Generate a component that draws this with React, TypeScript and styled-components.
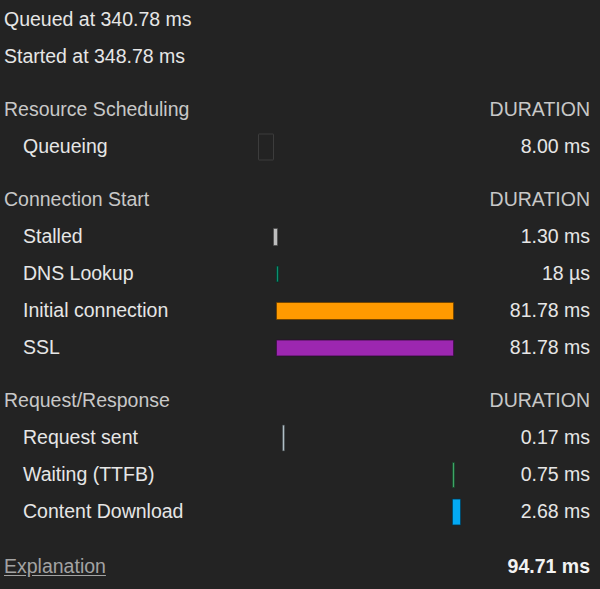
import React from "react";
import styled, { createGlobalStyle } from "styled-components";

const Global = createGlobalStyle`
  html, body { margin: 0; padding: 0; background: #232323; }
  body { font-family: "Liberation Sans", Arial, sans-serif; }
`;

const Page = styled.div`
  width: 600px;
  height: 589px;
  box-sizing: border-box;
  padding: 1px 10px 0 4px;
  background: #232323;
  color: #e6e6e6;
  font-size: 19.5px;
  overflow: hidden;
  display: flex;
  flex-direction: column;
`;

const Line = styled.div`
  height: 37px;
  display: flex;
  align-items: center;
`;

const Section = styled.section`
  margin-top: 16px;
  display: grid;
  grid-template-columns: 254px 204px 1fr;
  grid-auto-rows: 37px;
  align-items: center;
`;

const SectionTitle = styled.div`
  grid-column: 1 / 3;
  color: #c8c8c8;
`;

const DurationHead = styled.div`
  text-align: right;
  color: #c8c8c8;
`;

const Label = styled.div`
  padding-left: 19px;
`;

const Track = styled.div`
  position: relative;
  height: 37px;
`;

const Bar = styled.div<{ $color: string; $h: number; $outline?: boolean }>`
  position: absolute;
  top: 50%;
  height: ${(p) => p.$h}px;
  transform: translateY(-50%);
  box-sizing: border-box;
  background: ${(p) => (p.$outline ? "transparent" : p.$color)};
  border: 1px solid ${(p) => (p.$outline ? "#3c3c3c" : "rgba(0,0,0,0.55)")};
  border-radius: 1px;
`;

const Value = styled.div`
  text-align: right;
`;

const Footer = styled.div`
  margin-top: 18px;
  height: 37px;
  display: flex;
  justify-content: space-between;
  align-items: center;
`;

const Link = styled.a`
  color: #a3a3a3;
  text-decoration: underline;
  text-underline-offset: 2px;
`;

const Total = styled.div`
  font-weight: bold;
  color: #f2f2f2;
`;

type Row = {
  label: string;
  value: string;
  left: number;
  width: number;
  h: number;
  color: string;
  outline?: boolean;
};

const sections: { title: string; rows: Row[] }[] = [
  {
    title: "Resource Scheduling",
    rows: [
      { label: "Queueing", value: "8.00 ms", left: 0, width: 16, h: 27, color: "transparent", outline: true },
    ],
  },
  {
    title: "Connection Start",
    rows: [
      { label: "Stalled", value: "1.30 ms", left: 15, width: 5, h: 18, color: "#bdbdbd" },
      { label: "DNS Lookup", value: "18 µs", left: 18, width: 3, h: 17, color: "#0e8f70" },
      { label: "Initial connection", value: "81.78 ms", left: 18, width: 178, h: 18, color: "#ff9a00" },
      { label: "SSL", value: "81.78 ms", left: 18, width: 178, h: 17, color: "#9c27b0" },
    ],
  },
  {
    title: "Request/Response",
    rows: [
      { label: "Request sent", value: "0.17 ms", left: 24, width: 3, h: 27, color: "#b0bec5" },
      { label: "Waiting (TTFB)", value: "0.75 ms", left: 194, width: 3, h: 26, color: "#3fa466" },
      { label: "Content Download", value: "2.68 ms", left: 194, width: 9, h: 27, color: "#03a9f4" },
    ],
  },
];

export default function App() {
  return (
    <>
      <Global />
      <Page>
        <Line>Queued at 340.78 ms</Line>
        <Line>Started at 348.78 ms</Line>
        {sections.map((s) => (
          <Section key={s.title}>
            <SectionTitle>{s.title}</SectionTitle>
            <DurationHead>DURATION</DurationHead>
            {s.rows.map((r) => (
              <React.Fragment key={r.label}>
                <Label>{r.label}</Label>
                <Track>
                  <Bar
                    $color={r.color}
                    $h={r.h}
                    $outline={r.outline}
                    style={{ left: r.left, width: r.width }}
                  />
                </Track>
                <Value>{r.value}</Value>
              </React.Fragment>
            ))}
          </Section>
        ))}
        <Footer>
          <Link href="#">Explanation</Link>
          <Total>94.71 ms</Total>
        </Footer>
      </Page>
    </>
  );
}
